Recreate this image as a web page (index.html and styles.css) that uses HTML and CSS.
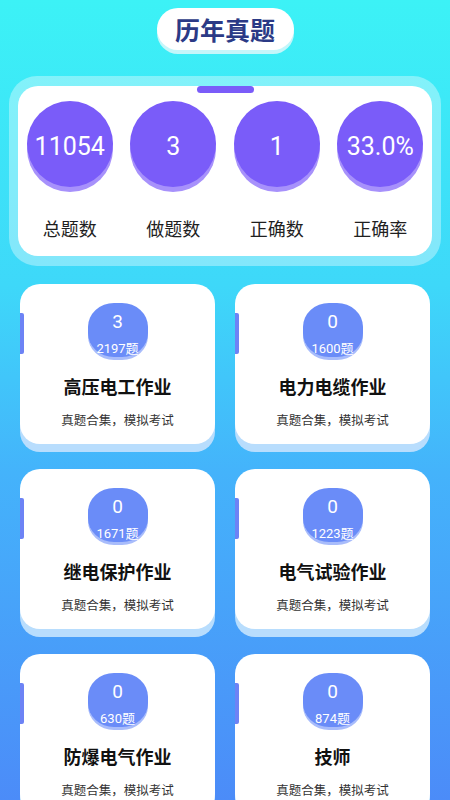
FILE: index.html
```html
<!DOCTYPE html>
<html lang="zh-CN">
<head>
  <meta charset="UTF-8">
  <title>历年真题</title>
  <link rel="stylesheet" href="styles.css">
</head>
<body>
  <header class="page-head">
    <h1 class="title-pill">历年真题</h1>
  </header>

  <section class="stats">
    <div class="stats-inner">
      <div class="stats-handle"></div>
      <div class="stats-grid">
        <div class="stat">
          <div class="stat-circle">11054</div>
          <div class="stat-label">总题数</div>
        </div>
        <div class="stat">
          <div class="stat-circle">3</div>
          <div class="stat-label">做题数</div>
        </div>
        <div class="stat">
          <div class="stat-circle">1</div>
          <div class="stat-label">正确数</div>
        </div>
        <div class="stat">
          <div class="stat-circle">33.0%</div>
          <div class="stat-label">正确率</div>
        </div>
      </div>
    </div>
  </section>

  <main class="cards">
    <div class="card">
      <span class="card-mark"></span>
      <div class="badge"><span class="badge-num">3</span><span class="badge-total">2197题</span></div>
      <div class="card-title">高压电工作业</div>
      <div class="card-sub">真题合集，模拟考试</div>
    </div>
    <div class="card">
      <span class="card-mark"></span>
      <div class="badge"><span class="badge-num">0</span><span class="badge-total">1600题</span></div>
      <div class="card-title">电力电缆作业</div>
      <div class="card-sub">真题合集，模拟考试</div>
    </div>
    <div class="card">
      <span class="card-mark"></span>
      <div class="badge"><span class="badge-num">0</span><span class="badge-total">1671题</span></div>
      <div class="card-title">继电保护作业</div>
      <div class="card-sub">真题合集，模拟考试</div>
    </div>
    <div class="card">
      <span class="card-mark"></span>
      <div class="badge"><span class="badge-num">0</span><span class="badge-total">1223题</span></div>
      <div class="card-title">电气试验作业</div>
      <div class="card-sub">真题合集，模拟考试</div>
    </div>
    <div class="card">
      <span class="card-mark"></span>
      <div class="badge"><span class="badge-num">0</span><span class="badge-total">630题</span></div>
      <div class="card-title">防爆电气作业</div>
      <div class="card-sub">真题合集，模拟考试</div>
    </div>
    <div class="card">
      <span class="card-mark"></span>
      <div class="badge"><span class="badge-num">0</span><span class="badge-total">874题</span></div>
      <div class="card-title">技师</div>
      <div class="card-sub">真题合集，模拟考试</div>
    </div>
  </main>
</body>
</html>
```

FILE: styles.css
```css
html, body {
  margin: 0;
  padding: 0;
}
body {
  min-height: 800px;
  background: linear-gradient(to bottom, #3cf2f6 0%, #3ed8f9 35%, #44b3fb 58%, #4c8af8 100%);
  font-family: Roboto, "Noto Sans CJK SC", sans-serif;
  color: #1a1a1a;
  overflow: hidden;
}
.page-head {
  display: flex;
  justify-content: center;
  padding-top: 8px;
}
.title-pill {
  margin: 0;
  width: 137px;
  height: 42px;
  line-height: 42px;
  text-align: center;
  background: #ffffff;
  border-radius: 21px;
  box-shadow: 0 4px 0 #c4f6fa;
  color: #2b3a86;
  font-size: 25px;
  font-weight: bold;
  font-family: "Noto Sans CJK SC", sans-serif;
}
.stats {
  margin: 26px 9px 0;
  padding: 10px 9px;
  background: rgba(255, 255, 255, 0.36);
  border-radius: 28px;
}
.stats-inner {
  background: #ffffff;
  border-radius: 20px;
  height: 170px;
  display: flex;
  flex-direction: column;
  align-items: center;
}
.stats-handle {
  width: 57px;
  height: 7px;
  background: #7a5cf9;
  border-radius: 4px;
}
.stats-grid {
  width: 100%;
  display: grid;
  grid-template-columns: repeat(4, 1fr);
  margin-top: 8px;
}
.stat {
  display: flex;
  flex-direction: column;
  align-items: center;
}
.stat-circle {
  width: 86px;
  height: 86px;
  border-radius: 50%;
  background: #7a5cf9;
  box-shadow: 0 5px 0 #a791fb;
  color: #ffffff;
  font-size: 25px;
  line-height: 92px;
  text-align: center;
}
.stat-label {
  margin-top: 31px;
  font-size: 18px;
  line-height: 24px;
  color: #1f1f1f;
}
.cards {
  display: grid;
  grid-template-columns: 195px 195px;
  column-gap: 20px;
  row-gap: 25px;
  padding: 18px 20px 0;
}
.card {
  position: relative;
  height: 160px;
  background: #ffffff;
  border-radius: 20px;
  box-shadow: 0 8px 0 #b8ddfd;
  display: flex;
  flex-direction: column;
  align-items: center;
  padding-top: 19px;
  box-sizing: border-box;
}
.card-mark {
  position: absolute;
  left: 0;
  top: 29px;
  width: 4px;
  height: 41px;
  background: #6d83f5;
  border-radius: 0 2px 2px 0;
}
.badge {
  width: 60px;
  height: 54px;
  border-radius: 26px / 24px;
  background: #6a8cf8;
  box-shadow: 0 3px 0 #a8bcfb;
  color: #ffffff;
  display: flex;
  flex-direction: column;
  align-items: center;
}
.badge-num {
  margin-top: 8px;
  font-size: 19px;
  line-height: 22px;
}
.badge-total {
  margin-top: 8px;
  font-size: 13px;
  line-height: 16px;
  white-space: nowrap;
}
.card-title {
  margin-top: 18px;
  font-size: 18px;
  line-height: 26px;
  font-weight: bold;
  color: #111111;
}
.card-sub {
  margin-top: 11px;
  font-size: 12.5px;
  line-height: 18px;
  color: #333333;
}
```
